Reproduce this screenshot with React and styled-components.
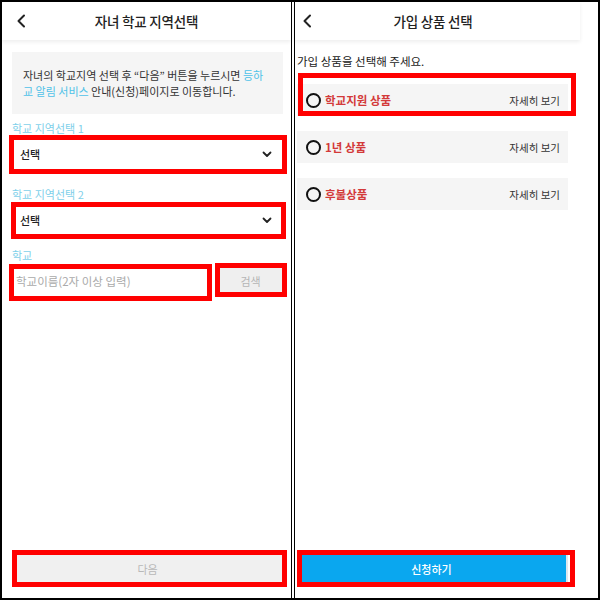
import React from 'react';
import styled, { createGlobalStyle } from 'styled-components';

const Global = createGlobalStyle`
  html, body { margin: 0; padding: 0; background: #fff; }
  body { font-family: "Noto Sans CJK KR", "Noto Sans", sans-serif; color: #222; }
  * { box-sizing: border-box; }
`;

const Frame = styled.div`
  width: 600px;
  height: 600px;
  border: 2px solid #000;
  display: flex;
  background: #fff;
  overflow: hidden;
`;

const Panel = styled.section`
  width: ${p => (p.$w ? `${p.$w}px` : 'auto')};
  flex: ${p => (p.$w ? '0 0 auto' : '1')};
  height: 100%;
  display: flex;
  flex-direction: column;
`;

const Screen = styled.div`
  width: ${p => p.$w}px;
  height: 100%;
  display: flex;
  flex-direction: column;
`;

const Divider = styled.div`
  width: 4px;
  flex: 0 0 4px;
  border-left: 1px solid #000;
  border-right: 1px solid #000;
  background: #fff;
`;

const Header = styled.header`
  height: 38px;
  flex: 0 0 38px;
  display: grid;
  grid-template-columns: ${p => p.$cols};
  align-items: center;
  background: #fff;
  box-shadow: 0 2px 4px rgba(0, 0, 0, 0.07);
  position: relative;
  z-index: 1;
`;

const Back = styled.span`
  display: flex;
  justify-content: center;
  align-items: center;
`;

const Title = styled.h1`
  margin: 0;
  text-align: center;
  font-size: 13.5px;
  font-weight: 500;
  color: #222;
  letter-spacing: -0.2px;
`;

const Body = styled.div`
  flex: 1;
  display: flex;
  flex-direction: column;
  padding: ${p => p.$pad};
`;

const Info = styled.div`
  background: #f5f5f5;
  padding: 15px 10px 15px 11px;
  font-size: 11px;
  line-height: 16px;
  color: #333;
`;

const Link = styled.span`
  color: #4fc2e8;
`;

const Label = styled.div`
  font-size: 11px;
  line-height: 16px;
  color: #7fd0ea;
  margin-top: ${p => p.$mt}px;
  margin-bottom: 2px;
`;

const Marked = styled.div`
  position: relative;
`;

const Ring = styled.span`
  position: absolute;
  top: ${p => p.$t}px;
  left: ${p => p.$l}px;
  right: ${p => p.$r}px;
  bottom: ${p => p.$b}px;
  border: 5px solid #ff0000;
  z-index: 2;
  pointer-events: none;
`;

const Select = styled.div`
  height: 32px;
  border: 1px solid #e0e0e0;
  background: #fff;
  display: flex;
  align-items: center;
  justify-content: space-between;
  padding: 0 10px 0 7px;
  font-size: 11px;
  font-weight: 500;
  color: #222;
`;

const SearchRow = styled.div`
  display: flex;
  gap: 10px;
`;

const Input = styled.div`
  width: 196px;
  height: 32px;
  border: 1px solid #e0e0e0;
  background: #fff;
  display: flex;
  align-items: center;
  padding: 0 3px;
  font-size: 11.5px;
  color: #aaa;
`;

const SearchBtn = styled.div`
  width: 65px;
  height: 32px;
  background: #efefef;
  color: #b5b5b5;
  font-size: 11px;
  display: flex;
  align-items: center;
  justify-content: center;
`;

const Bottom = styled.div`
  margin-top: auto;
  margin-bottom: 13px;
  width: ${p => p.$w}px;
`;

const Button = styled.div`
  height: 33px;
  background: ${p => (p.$primary ? '#0aa7ef' : '#f0f0f0')};
  color: ${p => (p.$primary ? '#fff' : '#b8b8b8')};
  font-size: 11px;
  font-weight: ${p => (p.$primary ? 500 : 400)};
  display: flex;
  align-items: center;
  justify-content: center;
  border-right: ${p => (p.$primary ? '2px solid #dfe8ee' : 'none')};
`;

const Sub = styled.p`
  margin: 13px 0 15px;
  font-size: 11.5px;
  line-height: 16px;
  color: #222;
`;

const List = styled.div`
  display: flex;
  flex-direction: column;
  gap: 15px;
  width: 271px;
`;

const Item = styled.div`
  height: 32px;
  background: #f5f5f5;
  display: flex;
  align-items: center;
  padding: 0 8px 0 9px;
`;

const Radio = styled.span`
  width: 15px;
  height: 15px;
  border: 2px solid #111;
  border-radius: 50%;
  margin-right: 4px;
  flex: 0 0 auto;
`;

const ItemName = styled.span`
  font-size: 11.5px;
  font-weight: 700;
  color: #d33a3a;
  flex: 1;
`;

const More = styled.span`
  font-size: 10.5px;
  color: #333;
`;

const Chevron = () => (
  <svg width="10" height="14" viewBox="0 0 10 14">
    <polyline points="8,1.5 2.5,7 8,12.5" fill="none" stroke="#222" strokeWidth="2" strokeLinecap="round" strokeLinejoin="round" />
  </svg>
);

const Down = () => (
  <svg width="10" height="7" viewBox="0 0 10 7">
    <polyline points="1.5,1.5 5,5 8.5,1.5" fill="none" stroke="#222" strokeWidth="1.8" strokeLinecap="round" strokeLinejoin="round" />
  </svg>
);

const products = ['학교지원 상품', '1년 상품', '후불상품'];

export default function App() {
  return (
    <>
      <Global />
      <Frame>
        <Panel $w={289}>
          <Header $cols="38px 1fr 38px">
            <Back><Chevron /></Back>
            <Title>자녀 학교 지역선택</Title>
            <span />
          </Header>
          <Body $pad="12px 8px 0 10px">
            <Info>
              자녀의 학교지역 선택 후 “다음” 버튼을 누르시면 <Link>등하<br />교 알림 서비스</Link> 안내(신청)페이지로 이동합니다.
            </Info>
            <Label $mt={6}>학교 지역선택 1</Label>
            <Marked>
              <Select>선택<Down /></Select>
              <Ring $t={-3} $l={-3} $r={-4} $b={-4} />
            </Marked>
            <Label $mt={16}>학교 지역선택 2</Label>
            <Marked>
              <Select>선택<Down /></Select>
              <Ring $t={-2} $l={-1} $r={-3} $b={-3} />
            </Marked>
            <Label $mt={11}>학교</Label>
            <SearchRow>
              <Marked>
                <Input>학교이름(2자 이상 입력)</Input>
                <Ring $t={-1} $l={-3} $r={-4} $b={-4} />
              </Marked>
              <Marked>
                <SearchBtn>검색</SearchBtn>
                <Ring $t={-2} $l={-3} $r={-4} $b={0} />
              </Marked>
            </SearchRow>
            <Bottom $w={271}>
              <Marked>
                <Button>다음</Button>
                <Ring $t={-2} $l={0} $r={-4} $b={-2} />
              </Marked>
            </Bottom>
          </Body>
        </Panel>
        <Divider />
        <Panel>
          <Screen $w={285}>
            <Header $cols="24px 1fr 33px">
              <Back><Chevron /></Back>
              <Title>가입 상품 선택</Title>
              <span />
            </Header>
            <Body $pad="0 0 0 2px">
              <Sub>가입 상품을 선택해 주세요.</Sub>
              <List>
                {products.map((name, i) => (
                  <Marked key={name}>
                    <Item>
                      <Radio />
                      <ItemName>{name}</ItemName>
                      <More>자세히 보기</More>
                    </Item>
                    {i === 0 && <Ring $t={-11} $l={1} $r={-8} $b={0} />}
                  </Marked>
                ))}
              </List>
              <Bottom $w={271}>
                <Marked>
                  <Button $primary>신청하기</Button>
                  <Ring $t={-2} $l={0} $r={-7} $b={-2} />
                </Marked>
              </Bottom>
            </Body>
          </Screen>
        </Panel>
      </Frame>
    </>
  );
}
